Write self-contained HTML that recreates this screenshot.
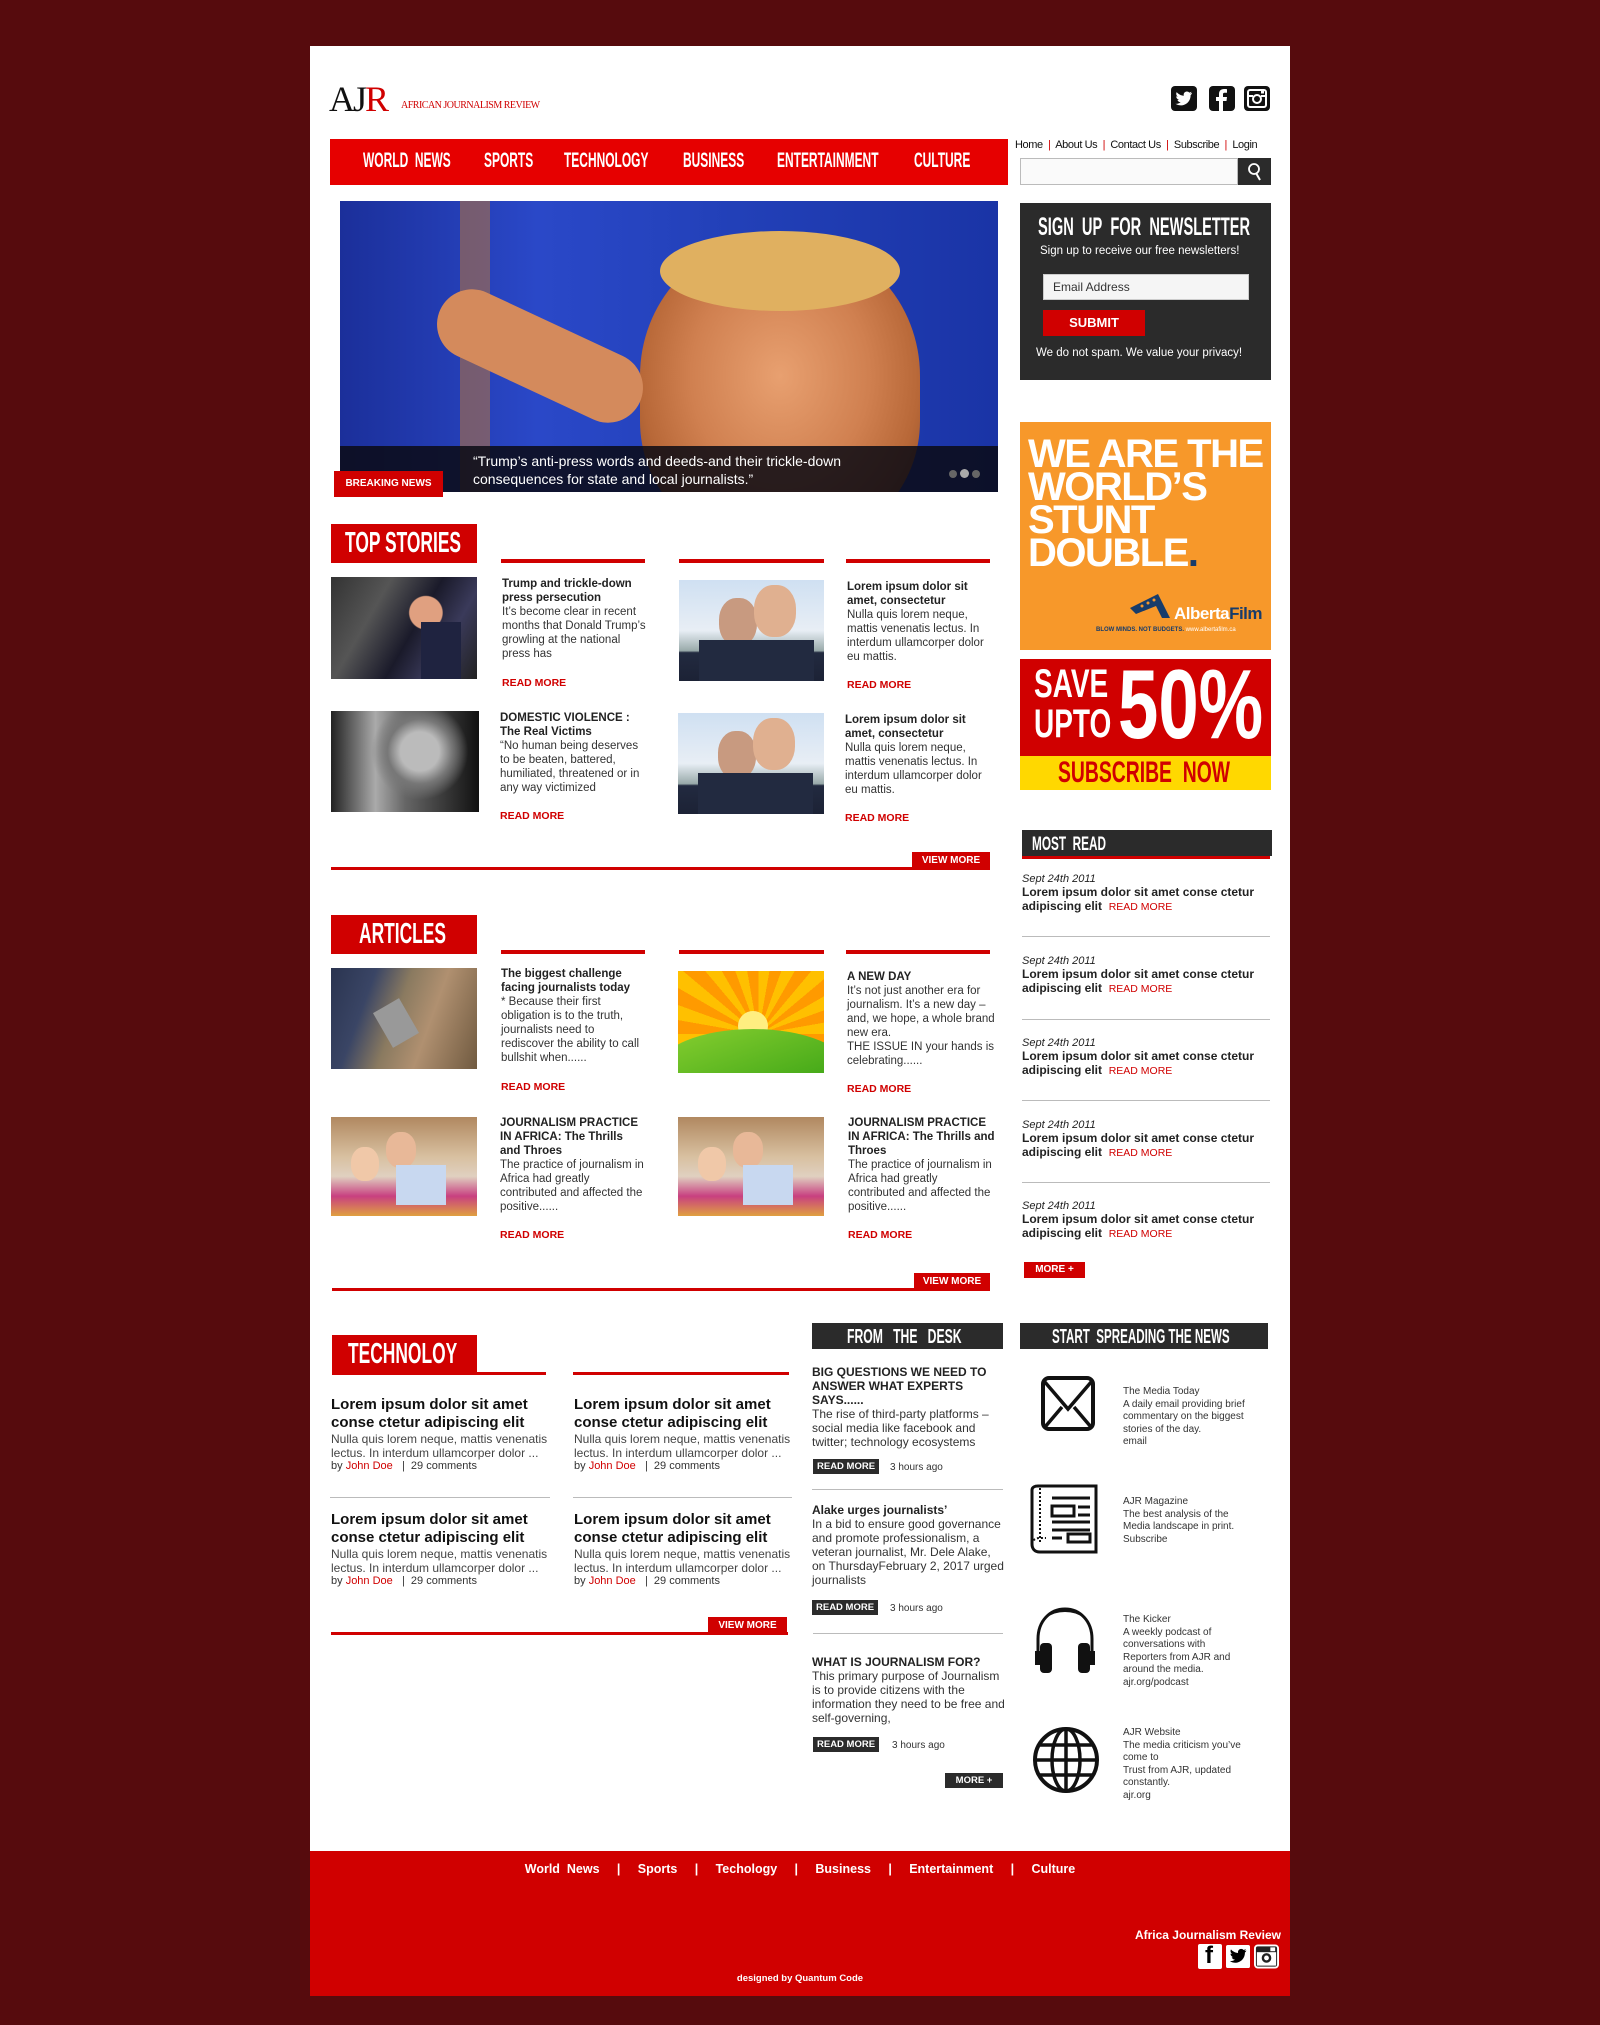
<!DOCTYPE html>
<html><head><meta charset="utf-8">
<style>
*{margin:0;padding:0;box-sizing:border-box}
body{width:1600px;height:2025px;background:#560b0d;font-family:"Liberation Sans",sans-serif;position:relative;overflow:hidden;color:#222}
.a{position:absolute}
#wrap{position:absolute;left:310px;top:46px;width:980px;height:1950px;background:#fff}
.cond{font-family:"Liberation Sans",sans-serif;font-weight:bold;transform-origin:left top;white-space:nowrap}
.hdr{background:#d00000;color:#fff;font-size:29px;line-height:39px;padding-left:14px;white-space:nowrap;overflow:hidden;font-weight:bold}
.hdr span{display:inline-block;transform:scaleX(.6);transform-origin:left}
.rl{height:4px;background:#d00000}
.t{font-size:11.5px;line-height:14px;color:#333}
.t b{color:#222}
.rm{color:#d00000;font-weight:bold;font-size:10.5px}
.vm{background:#d00000;color:#fff;font-weight:bold;font-size:10px;text-align:center;line-height:17px}
.dk{background:#2b2b2b;color:#fff}
.img{overflow:hidden}
.mr .d{font-style:italic;font-size:11px;color:#222}
.mr .h{font-weight:bold;font-size:12px;line-height:14px;color:#222}
.sep{height:1px;background:#bbb}
.tt{font-weight:bold;font-size:15px;line-height:18px;color:#111}
.tb{font-size:12px;line-height:14px;color:#444}
.by{font-size:11px;color:#333}
.by i{font-style:normal;color:#d00000}
.ft{font-weight:bold;font-size:12px;line-height:14px;color:#222}
.fb{font-size:12px;line-height:14px;color:#333}
.rb{background:#2b2b2b;color:#fff;font-size:9.5px;line-height:15px;padding:0 4px;font-weight:bold}
.ago{font-size:10px;color:#333}
.sp{font-size:10px;line-height:12.5px;color:#333}
.nv{color:#fff;font-size:21px;transform:scaleX(.57);top:149px}
</style></head><body>
<div id="wrap"></div>

<!-- logo -->
<div class="a" style="left:329px;top:78px;font-family:'Liberation Serif',serif;font-size:36px;letter-spacing:-2px;color:#111">AJ<span style="color:#d00000">R</span></div>
<div class="a" style="left:401px;top:100px;font-family:'Liberation Serif',serif;font-size:10px;color:#d00000;letter-spacing:-.5px">AFRICAN JOURNALISM REVIEW</div>

<!-- social top -->
<svg class="a" style="left:1171px;top:86px" width="26" height="25" viewBox="0 0 26 25"><rect width="26" height="25" rx="4" fill="#111"/><path d="M21 7c-.7.3-1.4.5-2 .6.7-.5 1.3-1.1 1.5-1.9-.7.4-1.4.7-2.2.9-1.4-1.5-3.8-1.4-5 .2-.6.8-.8 1.9-.5 2.9-2.8-.1-5.4-1.5-7.1-3.6-.9 1.6-.4 3.6 1.1 4.6-.6 0-1.1-.2-1.6-.4 0 1.7 1.2 3.1 2.8 3.5-.5.1-1 .2-1.6.1.5 1.4 1.8 2.4 3.3 2.4-1.5 1.2-3.4 1.7-5.2 1.5 6.6 4.2 15.2-.3 15.1-8.7.7-.5 1.2-1.1 1.4-1.8z" fill="#fff"/></svg>
<svg class="a" style="left:1209px;top:86px" width="26" height="25" viewBox="0 0 26 25"><rect width="26" height="25" rx="4" fill="#111"/><path d="M14 25V15h3.5l.5-4h-4V8.5c0-1.1.3-1.8 1.9-1.8H18V3.2C17.6 3.1 16.4 3 15 3c-3 0-5 1.8-5 5.1V11H7v4h3v10z" fill="#fff"/></svg>
<svg class="a" style="left:1244px;top:86px" width="26" height="25" viewBox="0 0 26 25"><rect width="26" height="25" rx="4" fill="#111"/><rect x="4" y="4" width="18" height="17" rx="2" fill="none" stroke="#fff" stroke-width="2"/><circle cx="13" cy="13" r="4" fill="none" stroke="#fff" stroke-width="2"/><rect x="4" y="9" width="5" height="2" fill="#fff"/><rect x="17" y="9" width="5" height="2" fill="#fff"/><rect x="17" y="5" width="3" height="2.5" fill="#fff"/></svg>

<!-- nav -->
<div class="a" style="left:330px;top:139px;width:678px;height:46px;background:#e60000"></div>
<div class="a cond nv" style="left:363px">WORLD&nbsp; NEWS</div>
<div class="a cond nv" style="left:484px">SPORTS</div>
<div class="a cond nv" style="left:564px">TECHNOLOGY</div>
<div class="a cond nv" style="left:683px">BUSINESS</div>
<div class="a cond nv" style="left:777px">ENTERTAINMENT</div>
<div class="a cond nv" style="left:914px">CULTURE</div>

<!-- top links -->
<div class="a" style="left:1015px;top:139px;font-size:11px;color:#111;white-space:nowrap;letter-spacing:-.4px">Home <span style="color:#d00000">&nbsp;|&nbsp;</span> About Us <span style="color:#d00000">&nbsp;|&nbsp;</span> Contact Us <span style="color:#d00000">&nbsp;|&nbsp;</span> Subscribe <span style="color:#d00000">&nbsp;|&nbsp;</span> Login</div>
<div class="a" style="left:1020px;top:158px;width:218px;height:27px;border:1px solid #bbb;background:#fafafa"></div>
<div class="a dk" style="left:1238px;top:158px;width:33px;height:27px"></div>
<svg class="a" style="left:1246px;top:162px" width="18" height="20" viewBox="0 0 18 20"><circle cx="8" cy="7" r="5" fill="none" stroke="#fff" stroke-width="1.8"/><path d="M10 11l4 7" stroke="#fff" stroke-width="2"/></svg>

<!-- hero -->
<div class="a img" style="left:340px;top:201px;width:658px;height:291px;background:linear-gradient(90deg,#1b2f9a 0%,#2a48c8 30%,#2240b8 60%,#1a34a6 100%)">
 <div class="a" style="left:120px;top:0;width:30px;height:291px;background:rgba(200,120,40,.5)"></div>
 <div class="a" style="left:300px;top:40px;width:280px;height:300px;border-radius:45% 45% 40% 40%;background:radial-gradient(ellipse at 50% 45%,#e8a070 0%,#d08050 45%,#b86838 70%,#7a4020 100%)"></div>
 <div class="a" style="left:320px;top:30px;width:240px;height:80px;border-radius:50%;background:#e0b060"></div>
 <div class="a" style="left:90px;top:120px;width:220px;height:70px;border-radius:40px;background:#d48a5c;transform:rotate(25deg)"></div>
 <div class="a" style="left:0;top:245px;width:658px;height:46px;background:rgba(10,10,20,.85)"></div>
 <div class="a" style="left:133px;top:251px;color:#fff;font-size:14px;line-height:18px">“Trump’s anti-press words and deeds-and their trickle-down<br>consequences for state and local journalists.”</div>
 <div class="a" style="left:609px;top:269px;width:8px;height:8px;border-radius:50%;background:#666"></div>
 <div class="a" style="left:620px;top:268px;width:9px;height:9px;border-radius:50%;background:#aaa"></div>
 <div class="a" style="left:632px;top:269px;width:8px;height:8px;border-radius:50%;background:#666"></div>
</div>
<div class="a" style="left:334px;top:471px;width:109px;height:26px;background:#d00000;color:#fff;font-size:10px;font-weight:bold;line-height:26px;text-align:center">BREAKING NEWS</div>

<!-- newsletter -->
<div class="a dk" style="left:1020px;top:203px;width:251px;height:177px"></div>
<div class="a cond" style="left:1038px;top:213px;color:#fff;font-size:25px;transform:scaleX(.585)">SIGN&nbsp; UP&nbsp; FOR&nbsp; NEWSLETTER</div>
<div class="a" style="left:1040px;top:245px;color:#fff;font-size:11.5px">Sign up to receive our free newsletters!</div>
<div class="a" style="left:1043px;top:274px;width:206px;height:26px;background:#f5f5f5;border:1px solid #ccc;font-size:12px;line-height:24px;padding-left:9px;color:#333">Email Address</div>
<div class="a" style="left:1043px;top:310px;width:102px;height:26px;background:#d00000;color:#fff;font-weight:bold;font-size:13px;line-height:26px;text-align:center">SUBMIT</div>
<div class="a" style="left:1036px;top:347px;color:#fff;font-size:11.5px;white-space:nowrap">We do not spam. We value your privacy!</div>

<!-- ads -->
<div class="a" style="left:1020px;top:422px;width:251px;height:228px;background:#f7982a"></div>
<div class="a" style="left:1028px;top:438px;color:#fff;font-weight:bold;font-size:40px;line-height:33px;letter-spacing:-1.5px;white-space:nowrap">WE ARE THE<br>WORLD’S<br>STUNT<br>DOUBLE<span style="color:#173c6b">.</span></div>
<svg class="a" style="left:1128px;top:592px" width="45" height="28" viewBox="0 0 45 28"><path d="M2 16L30 2l12 24h-8L28 14 8 22z" fill="#173c6b"/><circle cx="14" cy="14" r="1.5" fill="#f7982a"/><circle cx="20" cy="11" r="1.5" fill="#f7982a"/><circle cx="26" cy="8" r="1.5" fill="#f7982a"/></svg>
<div class="a" style="left:1174px;top:604px;font-weight:bold;font-size:17px;color:#fff;letter-spacing:-.5px">Alberta<span style="color:#173c6b">Film</span></div>
<div class="a" style="left:1096px;top:627px;font-size:6px;font-weight:bold;color:#173c6b;white-space:nowrap">BLOW MINDS. NOT BUDGETS. <span style="color:#fff;font-weight:normal">www.albertafilm.ca</span></div>
<div class="a" style="left:1020px;top:659px;width:251px;height:97px;background:#d00000"></div>
<div class="a" style="left:1020px;top:756px;width:251px;height:34px;background:#ffd800"></div>
<div class="a cond" style="left:1034px;top:664px;color:#fff;font-size:40px;line-height:40px;transform:scaleX(.7)">SAVE<br>UPTO</div>
<div class="a cond" style="left:1118px;top:654px;color:#fff;font-size:98px;line-height:100px;transform:scaleX(.74)">50%</div>
<div class="a cond" style="left:1058px;top:757px;color:#d00000;font-size:30px;line-height:32px;transform:scaleX(.645)">SUBSCRIBE&nbsp; NOW</div>

<!-- most read -->
<div class="a dk" style="left:1022px;top:830px;width:250px;height:26px"></div>
<div class="a rl" style="left:1022px;top:856px;width:248px;height:3px"></div>
<div class="a cond" style="left:1032px;top:834px;color:#fff;font-size:19px;transform:scaleX(.62)">MOST&nbsp; READ</div>
<div class="a mr" style="left:1022px;top:873px;width:250px"><div class="d">Sept 24th 2011</div><div class="h">Lorem ipsum dolor sit amet conse ctetur adipiscing elit&nbsp; <span class="rm" style="font-weight:normal">READ MORE</span></div></div>
<div class="a sep" style="left:1022px;top:936px;width:248px"></div>
<div class="a mr" style="left:1022px;top:955px;width:250px"><div class="d">Sept 24th 2011</div><div class="h">Lorem ipsum dolor sit amet conse ctetur adipiscing elit&nbsp; <span class="rm" style="font-weight:normal">READ MORE</span></div></div>
<div class="a sep" style="left:1022px;top:1019px;width:248px"></div>
<div class="a mr" style="left:1022px;top:1037px;width:250px"><div class="d">Sept 24th 2011</div><div class="h">Lorem ipsum dolor sit amet conse ctetur adipiscing elit&nbsp; <span class="rm" style="font-weight:normal">READ MORE</span></div></div>
<div class="a sep" style="left:1022px;top:1100px;width:248px"></div>
<div class="a mr" style="left:1022px;top:1119px;width:250px"><div class="d">Sept 24th 2011</div><div class="h">Lorem ipsum dolor sit amet conse ctetur adipiscing elit&nbsp; <span class="rm" style="font-weight:normal">READ MORE</span></div></div>
<div class="a sep" style="left:1022px;top:1182px;width:248px"></div>
<div class="a mr" style="left:1022px;top:1200px;width:250px"><div class="d">Sept 24th 2011</div><div class="h">Lorem ipsum dolor sit amet conse ctetur adipiscing elit&nbsp; <span class="rm" style="font-weight:normal">READ MORE</span></div></div>
<div class="a vm" style="left:1024px;top:1262px;width:61px;height:16px;line-height:16px">MORE +</div>

<!-- TOP STORIES -->
<div class="a hdr" style="left:331px;top:524px;width:146px"><span>TOP STORIES</span></div>
<div class="a rl" style="left:501px;top:559px;width:144px"></div>
<div class="a rl" style="left:679px;top:559px;width:145px"></div>
<div class="a rl" style="left:846px;top:559px;width:144px"></div>

<div class="a img" style="left:331px;top:577px;width:146px;height:102px;background:radial-gradient(circle at 65% 35%,#e0a080 0 14%,transparent 15%),linear-gradient(120deg,#333 0%,#555 30%,#1a1a2a 55%,#3a3a5a 75%,#222 100%)"><div class="a" style="left:90px;top:45px;width:40px;height:57px;background:#1f2340"></div></div>
<div class="a t" style="left:502px;top:577px;width:148px"><b>Trump and trickle-down press persecution</b><br>It’s become clear in recent months that Donald Trump’s growling at the national press has</div>
<div class="a rm" style="left:502px;top:677px">READ MORE</div>

<div class="a img" style="left:679px;top:580px;width:145px;height:101px;background:linear-gradient(180deg,#cfe0f2 0%,#e8eef5 50%,#9aa 70%,#222a40 72%,#1c2235 100%)"><div class="a" style="left:40px;top:18px;width:38px;height:48px;border-radius:45%;background:#c89a80"></div><div class="a" style="left:75px;top:5px;width:42px;height:52px;border-radius:45%;background:#e0b090"></div><div class="a" style="left:20px;top:60px;width:115px;height:50px;background:#222a40"></div></div>
<div class="a t" style="left:847px;top:580px;width:148px"><b>Lorem ipsum dolor sit amet, consectetur</b><br>Nulla quis lorem neque, mattis venenatis lectus. In interdum ullamcorper dolor eu mattis.</div>
<div class="a rm" style="left:847px;top:679px">READ MORE</div>

<div class="a img" style="left:331px;top:711px;width:148px;height:101px;background:radial-gradient(circle at 60% 40%,#bbb 0 18%,#777 30%,transparent 45%),linear-gradient(90deg,#222 0%,#aaa 30%,#666 50%,#111 100%)"></div>
<div class="a t" style="left:500px;top:711px;width:150px"><b>DOMESTIC VIOLENCE : The Real Victims</b><br>“No human being deserves to be beaten, battered, humiliated, threatened or in any way victimized</div>
<div class="a rm" style="left:500px;top:810px">READ MORE</div>

<div class="a img" style="left:678px;top:713px;width:146px;height:101px;background:linear-gradient(180deg,#cfe0f2 0%,#e8eef5 50%,#9aa 70%,#222a40 72%,#1c2235 100%)"><div class="a" style="left:40px;top:18px;width:38px;height:48px;border-radius:45%;background:#c89a80"></div><div class="a" style="left:75px;top:5px;width:42px;height:52px;border-radius:45%;background:#e0b090"></div><div class="a" style="left:20px;top:60px;width:115px;height:50px;background:#222a40"></div></div>
<div class="a t" style="left:845px;top:713px;width:150px"><b>Lorem ipsum dolor sit amet, consectetur</b><br>Nulla quis lorem neque, mattis venenatis lectus. In interdum ullamcorper dolor eu mattis.</div>
<div class="a rm" style="left:845px;top:812px">READ MORE</div>

<div class="a rl" style="left:331px;top:867px;width:659px;height:3px"></div>
<div class="a vm" style="left:912px;top:852px;width:78px">VIEW MORE</div>

<!-- ARTICLES -->
<div class="a hdr" style="left:331px;top:915px;width:146px;padding-left:28px"><span>ARTICLES</span></div>
<div class="a rl" style="left:501px;top:950px;width:144px"></div>
<div class="a rl" style="left:679px;top:950px;width:145px"></div>
<div class="a rl" style="left:846px;top:950px;width:144px"></div>

<div class="a img" style="left:331px;top:968px;width:146px;height:101px;background:linear-gradient(110deg,#2a3450 0%,#3a4565 25%,#8a7a60 45%,#b09070 65%,#705a40 100%)"><div class="a" style="left:50px;top:35px;width:30px;height:40px;background:#999;transform:rotate(-30deg)"></div></div>
<div class="a t" style="left:501px;top:967px;width:145px"><b>The biggest challenge facing journalists today</b><br>* Because their first obligation is to the truth, journalists need to rediscover the ability to call bullshit when......</div>
<div class="a rm" style="left:501px;top:1081px">READ MORE</div>

<div class="a img" style="left:678px;top:971px;width:146px;height:102px;background:repeating-conic-gradient(from 0deg at 55% 62%,#ffc000 0 10deg,#ff9a00 10deg 20deg)"><div class="a" style="left:60px;top:40px;width:30px;height:30px;border-radius:50%;background:#ffee80"></div><div class="a" style="left:-20px;top:58px;width:190px;height:80px;border-radius:50%;background:linear-gradient(160deg,#8ad030,#2a9a10)"></div></div>
<div class="a t" style="left:847px;top:970px;width:148px"><b>A NEW DAY</b><br>It’s not just another era for journalism. It’s a new day – and, we hope, a whole brand new era.<br>THE ISSUE IN your hands is celebrating......</div>
<div class="a rm" style="left:847px;top:1083px">READ MORE</div>

<div class="a img" style="left:331px;top:1117px;width:146px;height:99px;background:linear-gradient(180deg,#b08860 0%,#d8c0a0 40%,#e0d0c0 60%,#c84080 80%,#e0a040 100%)"><div class="a" style="left:55px;top:15px;width:30px;height:36px;border-radius:45%;background:#e8b898"></div><div class="a" style="left:20px;top:30px;width:28px;height:34px;border-radius:45%;background:#f0c8a8"></div><div class="a" style="left:65px;top:48px;width:50px;height:40px;background:#c8d8f0"></div></div>
<div class="a t" style="left:500px;top:1116px;width:146px"><b>JOURNALISM PRACTICE IN AFRICA: The Thrills and Throes</b><br>The practice of journalism in Africa had greatly contributed and affected the positive......</div>
<div class="a rm" style="left:500px;top:1229px">READ MORE</div>

<div class="a img" style="left:678px;top:1117px;width:146px;height:99px;background:linear-gradient(180deg,#b08860 0%,#d8c0a0 40%,#e0d0c0 60%,#c84080 80%,#e0a040 100%)"><div class="a" style="left:55px;top:15px;width:30px;height:36px;border-radius:45%;background:#e8b898"></div><div class="a" style="left:20px;top:30px;width:28px;height:34px;border-radius:45%;background:#f0c8a8"></div><div class="a" style="left:65px;top:48px;width:50px;height:40px;background:#c8d8f0"></div></div>
<div class="a t" style="left:848px;top:1116px;width:148px"><b>JOURNALISM PRACTICE IN AFRICA: The Thrills and Throes</b><br>The practice of journalism in Africa had greatly contributed and affected the positive......</div>
<div class="a rm" style="left:848px;top:1229px">READ MORE</div>

<div class="a rl" style="left:332px;top:1288px;width:658px;height:3px"></div>
<div class="a vm" style="left:914px;top:1273px;width:76px">VIEW MORE</div>

<!-- TECHNOLOY -->
<div class="a hdr" style="left:332px;top:1335px;width:145px;padding-left:16px"><span>TECHNOLOY</span></div>
<div class="a rl" style="left:332px;top:1372px;width:214px;height:3px"></div>
<div class="a rl" style="left:573px;top:1372px;width:216px;height:3px"></div>

<div class="a" style="left:331px;top:1396px;width:220px"><div class="tt">Lorem ipsum dolor sit amet conse ctetur adipiscing elit</div><div class="tb">Nulla quis lorem neque, mattis venenatis lectus. In interdum ullamcorper dolor ...</div><div class="by">by <i>John Doe</i> &nbsp; | &nbsp;29 comments</div></div>
<div class="a" style="left:574px;top:1396px;width:220px"><div class="tt">Lorem ipsum dolor sit amet conse ctetur adipiscing elit</div><div class="tb">Nulla quis lorem neque, mattis venenatis lectus. In interdum ullamcorper dolor ...</div><div class="by">by <i>John Doe</i> &nbsp; | &nbsp;29 comments</div></div>
<div class="a sep" style="left:330px;top:1497px;width:220px"></div>
<div class="a sep" style="left:573px;top:1497px;width:219px"></div>
<div class="a" style="left:331px;top:1511px;width:220px"><div class="tt">Lorem ipsum dolor sit amet conse ctetur adipiscing elit</div><div class="tb">Nulla quis lorem neque, mattis venenatis lectus. In interdum ullamcorper dolor ...</div><div class="by">by <i>John Doe</i> &nbsp; | &nbsp;29 comments</div></div>
<div class="a" style="left:574px;top:1511px;width:220px"><div class="tt">Lorem ipsum dolor sit amet conse ctetur adipiscing elit</div><div class="tb">Nulla quis lorem neque, mattis venenatis lectus. In interdum ullamcorper dolor ...</div><div class="by">by <i>John Doe</i> &nbsp; | &nbsp;29 comments</div></div>
<div class="a rl" style="left:331px;top:1632px;width:457px;height:3px"></div>
<div class="a vm" style="left:708px;top:1617px;width:79px">VIEW MORE</div>

<!-- FROM THE DESK -->
<div class="a dk" style="left:812px;top:1323px;width:191px;height:26px"></div>
<div class="a cond" style="left:847px;top:1326px;color:#fff;font-size:20px;transform:scaleX(.61)">FROM&nbsp;&nbsp; THE&nbsp;&nbsp; DESK</div>
<div class="a" style="left:812px;top:1365px;width:195px"><div class="ft">BIG QUESTIONS WE NEED TO ANSWER WHAT EXPERTS SAYS......</div><div class="fb">The rise of third-party platforms – social media like facebook and twitter; technology ecosystems</div></div>
<div class="a rb" style="left:813px;top:1459px">READ MORE</div><div class="a ago" style="left:890px;top:1462px">3 hours ago</div>
<div class="a sep" style="left:812px;top:1489px;width:191px"></div>
<div class="a" style="left:812px;top:1503px;width:193px"><div class="ft">Alake urges journalists’</div><div class="fb">In a bid to ensure good governance and promote professionalism, a veteran journalist, Mr. Dele Alake, on ThursdayFebruary 2, 2017 urged journalists</div></div>
<div class="a rb" style="left:812px;top:1600px">READ MORE</div><div class="a ago" style="left:890px;top:1603px">3 hours ago</div>
<div class="a sep" style="left:813px;top:1633px;width:190px"></div>
<div class="a" style="left:812px;top:1655px;width:193px"><div class="ft">WHAT IS JOURNALISM FOR?</div><div class="fb">This primary purpose of Journalism is to provide citizens with the information they need to be free and self-governing,</div></div>
<div class="a rb" style="left:813px;top:1737px">READ MORE</div><div class="a ago" style="left:892px;top:1740px">3 hours ago</div>
<div class="a rb" style="left:945px;top:1773px;width:58px;text-align:center">MORE +</div>

<!-- START SPREADING -->
<div class="a dk" style="left:1020px;top:1323px;width:248px;height:26px"></div>
<div class="a cond" style="left:1052px;top:1326px;color:#fff;font-size:20px;transform:scaleX(.58)">START&nbsp; SPREADING THE NEWS</div>

<svg class="a" style="left:1040px;top:1375px" width="56" height="57" viewBox="0 0 56 57"><rect x="3" y="3" width="50" height="51" rx="6" fill="none" stroke="#111" stroke-width="4"/><path d="M4 6l24 28L52 6M5 52l17-20M51 52L34 32" fill="none" stroke="#111" stroke-width="3.5"/></svg>
<div class="a sp" style="left:1123px;top:1386px;width:125px">The Media Today<br>A daily email providing brief commentary on the biggest stories of the day.<br>email</div>

<svg class="a" style="left:1030px;top:1482px" width="70" height="72" viewBox="0 0 70 72"><path d="M10 4h56v66H10C4 70 2 66 2 62V8c0-3 3-4 6-4z" fill="none" stroke="#111" stroke-width="3"/><path d="M10 6v56M2 62c0-4 4-6 8-6h6" fill="none" stroke="#111" stroke-width="2" stroke-dasharray="2 2"/><path d="M22 16h38M22 48h38M22 40h38" stroke="#111" stroke-width="3"/><rect x="22" y="24" width="22" height="10" fill="none" stroke="#111" stroke-width="3"/><path d="M48 25h12M48 33h12M22 56h10" stroke="#111" stroke-width="3"/><rect x="38" y="52" width="22" height="8" fill="none" stroke="#111" stroke-width="3"/></svg>
<div class="a sp" style="left:1123px;top:1496px;width:120px">AJR Magazine<br>The best analysis of the Media landscape in print.<br>Subscribe</div>

<svg class="a" style="left:1032px;top:1605px" width="66" height="72" viewBox="0 0 66 72"><path d="M6 50V34C6 16 18 4 33 4s27 12 27 30v16" fill="none" stroke="#111" stroke-width="3"/><path d="M14 12c10-8 28-8 38 0" fill="none" stroke="#111" stroke-width="2"/><rect x="8" y="38" width="12" height="30" rx="4" fill="#111"/><rect x="46" y="38" width="12" height="30" rx="4" fill="#111"/><rect x="3" y="46" width="5" height="14" fill="#111"/><rect x="58" y="46" width="5" height="14" fill="#111"/></svg>
<div class="a sp" style="left:1123px;top:1614px;width:110px">The Kicker<br>A weekly podcast of conversations with Reporters from AJR and around the media.<br>ajr.org/podcast</div>

<svg class="a" style="left:1032px;top:1725px" width="68" height="70" viewBox="0 0 68 70"><circle cx="34" cy="35" r="31" fill="none" stroke="#111" stroke-width="4"/><ellipse cx="34" cy="35" rx="14" ry="31" fill="none" stroke="#111" stroke-width="3.5"/><path d="M34 4v62M3 35h62M8 20h52M8 50h52" stroke="#111" stroke-width="3.5"/></svg>
<div class="a sp" style="left:1123px;top:1727px;width:120px">AJR Website<br>The media criticism you’ve come to<br>Trust from AJR, updated constantly.<br>ajr.org</div>

<!-- FOOTER -->
<div class="a" style="left:310px;top:1851px;width:980px;height:145px;background:#d00000"></div>
<div class="a" style="left:310px;top:1862px;width:980px;text-align:center;color:#fff;font-size:12.5px;white-space:pre;font-weight:bold">World  News     |     Sports     |     Techology     |     Business     |     Entertainment     |     Culture</div>
<div class="a" style="left:1100px;top:1928px;width:181px;text-align:right;color:#fff;font-size:12px;font-weight:bold">Africa Journalism Review</div>
<div class="a" style="left:1198px;top:1944px;width:24px;height:25px;background:#fff;border-radius:2px"></div>
<div class="a" style="left:1205px;top:1942px;font-weight:bold;font-size:24px;color:#000">f</div>
<svg class="a" style="left:1226px;top:1944px" width="24" height="25" viewBox="0 0 26 25"><rect width="26" height="25" rx="2" fill="#fff"/><path d="M22 6c-.7.3-1.4.5-2.2.6.8-.5 1.4-1.2 1.7-2.1-.8.4-1.6.8-2.4.9-1.5-1.6-4.1-1.5-5.4.2-.7.9-.9 2-.6 3.1-3-.1-5.8-1.6-7.7-3.9-1 1.7-.4 3.9 1.2 5-.6 0-1.2-.2-1.7-.4 0 1.8 1.3 3.4 3 3.8-.5.1-1.1.2-1.7.1.5 1.5 1.9 2.6 3.6 2.6-1.6 1.3-3.7 1.8-5.6 1.6 7.1 4.5 16.4-.3 16.3-9.4.8-.5 1.3-1.2 1.5-2z" fill="#000"/></svg>
<svg class="a" style="left:1254px;top:1944px" width="25" height="25" viewBox="0 0 26 25"><rect x="1" y="1" width="24" height="23" rx="3" fill="#222" stroke="#fff" stroke-width="2"/><rect x="3" y="8" width="20" height="14" fill="#fff"/><circle cx="13" cy="14" r="5" fill="#222"/><circle cx="13" cy="14" r="2.5" fill="#fff"/><rect x="17" y="3" width="5" height="4" fill="#fff"/></svg>
<div class="a" style="left:310px;top:1973px;width:980px;text-align:center;color:#fff;font-size:9.5px;font-weight:bold">designed by Quantum Code</div>
</body></html>
